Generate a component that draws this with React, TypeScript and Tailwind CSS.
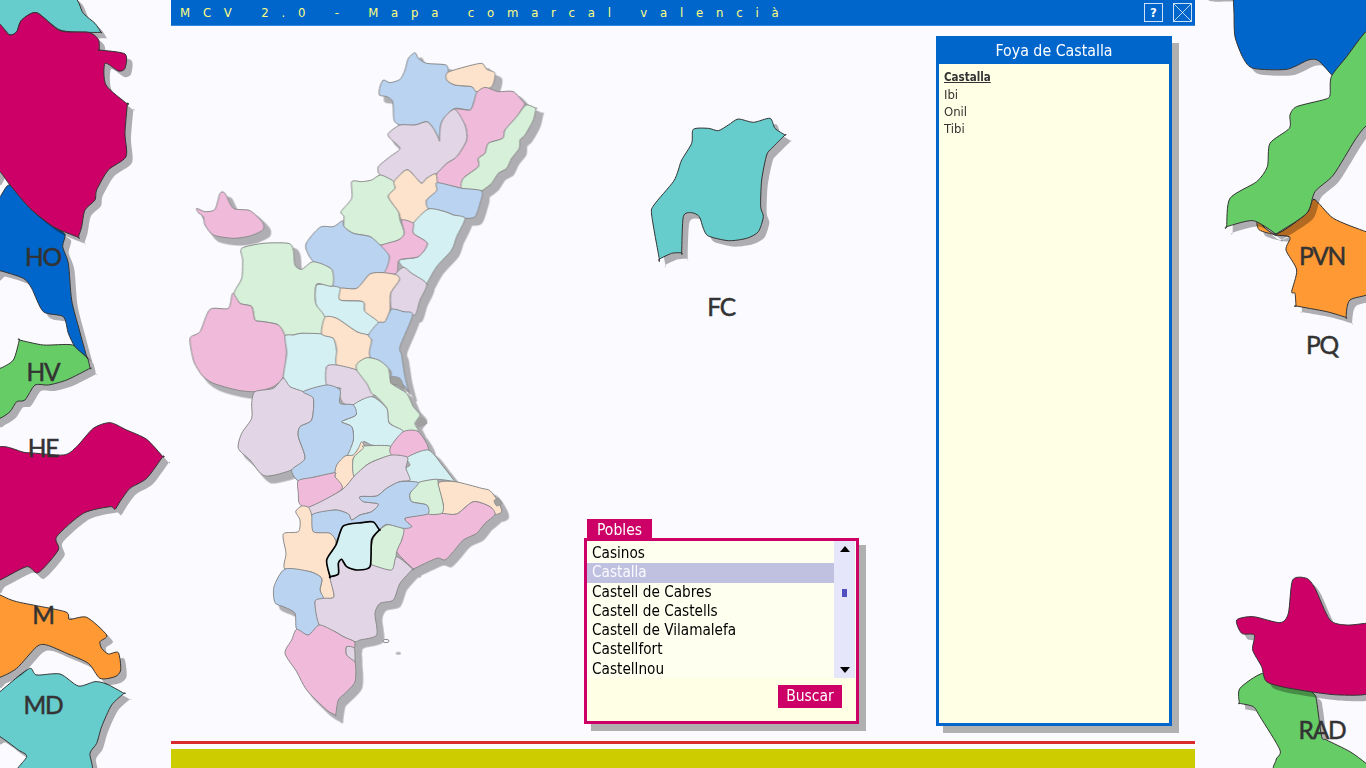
import React from "react";

const PINK = "#f0bbdb", BLUE = "#b9d3f1", PEACH = "#fde3cb", GREEN = "#d6f0da", LILAC = "#e2d5e6", CYAN = "#d5f0f3";

function smooth(s: string): string {
  const p = s.trim().split(/\s+/).map((t) => t.split(",").map(Number));
  const n = p.length;
  let d = `M${p[0][0]} ${p[0][1]}`;
  const k = 1 / 8;
  for (let i = 0; i < n; i++) {
    const p0 = p[(i - 1 + n) % n], p1 = p[i], p2 = p[(i + 1) % n], p3 = p[(i + 2) % n];
    const c1x = p1[0] + (p2[0] - p0[0]) * k, c1y = p1[1] + (p2[1] - p0[1]) * k;
    const c2x = p2[0] - (p3[0] - p1[0]) * k, c2y = p2[1] - (p3[1] - p1[1]) * k;
    d += `C${c1x.toFixed(1)} ${c1y.toFixed(1)} ${c2x.toFixed(1)} ${c2y.toFixed(1)} ${p2[0]} ${p2[1]}`;
  }
  return d + "Z";
}

// Upper half of the map, traced at 3x from (170,30)
const upper: [string, string][] = [
  [BLUE, "735,68 745,85 770,100 828,105 835,128 830,150 855,165 905,170 920,188 910,220 900,240 855,235 825,260 812,285 808,330 808,330 790,295 770,275 735,285 690,285 672,270 668,215 650,200 628,195 630,170 640,150 660,158 690,148 705,120 715,85"],
  [PEACH, "832,128 880,112 935,100 950,118 975,130 965,170 920,185 905,170 855,165 830,150"],
  [PINK, "945,172 985,185 1030,185 1065,222 1065,222 1040,260 1005,300 998,325 955,340 945,370 925,385 925,410 880,445 876,475 855,470 798,458 800,432 830,400 860,380 890,330 885,285 855,238 900,240 912,215 920,188"],
  [GREEN, "1068,225 1098,235 1098,235 1090,270 1065,315 1050,330 1048,355 1025,385 1010,415 985,430 965,460 935,483 935,483 876,475 880,445 925,410 925,385 945,370 955,340 998,325 1005,300 1040,260"],
  [LILAC, "855,238 885,285 890,330 860,380 830,400 798,432 770,445 755,460 735,440 715,420 700,425 672,455 630,435 625,410 660,380 690,355 660,325 655,310 690,285 735,285 770,275 790,295 808,330 808,330 812,285 825,260"],
  [GREEN, "632,435 672,455 675,475 655,500 685,545 690,570 703,610 685,630 630,645 600,620 550,610 522,590 522,560 513,545 545,505 545,455 575,455 605,450"],
  [PEACH, "700,425 715,420 735,440 755,460 770,445 798,432 800,482 770,510 775,535 730,580 695,570 685,545 655,500 675,475 672,455"],
  [BLUE, "800,458 855,470 876,475 935,483 930,520 915,560 885,565 850,555 825,545 775,535 770,510 800,482"],
  [CYAN, "775,537 825,545 850,555 885,565 860,620 845,660 800,710 770,762 770,762 725,730 700,712 688,690 745,680 772,640 730,610 730,580"],
  [PINK, "695,570 730,580 730,610 772,640 745,680 688,690 680,730 642,728 658,680 632,648 685,630 703,610"],
  [BLUE, "518,572 522,590 550,610 600,620 630,645 658,680 642,728 600,732 560,775 510,775 487,765 485,718 430,695 407,645 450,592 490,590"],
  [LILAC, "700,712 725,730 770,762 750,810 735,855 700,845 665,838 662,790 688,750 675,735"],
  [PEACH, "600,732 640,728 680,735 688,750 662,790 660,840 645,875 625,878 585,845 578,815 510,810 508,775 560,775"],
  [CYAN, "440,765 487,768 510,775 510,810 578,815 585,845 625,878 595,915 560,905 500,865 465,862 437,820"],
  [GREEN, "215,655 280,640 355,640 370,660 375,705 395,718 430,695 485,718 487,768 440,762 437,820 465,862 455,912 395,910 370,915 345,918 325,885 280,875 255,870 245,830 210,820 192,790 215,745 218,690"],
  [PINK, "188,790 210,820 245,830 255,870 280,875 325,885 345,918 350,970 340,1040 310,1070 255,1085 200,1080 130,1060 100,1040 85,1020 70,990 60,925 90,905 120,838 175,835"],
  [CYAN, "345,918 370,915 395,910 455,912 490,925 500,960 500,1005 470,1010 470,1065 400,1085 350,1070 340,1040 350,970"],
  [PEACH, "465,862 500,865 560,905 595,915 605,930 600,980 565,1000 560,1020 500,1005 500,960 490,925 455,912"],
  [BLUE, "595,915 625,878 645,875 665,838 700,845 728,855 690,950 695,975 705,1040 718,1090 718,1090 700,1065 665,1060 660,1020 600,980 605,930"],
  [LILAC, "470,1010 500,1005 560,1020 595,1045 612,1095 555,1123 520,1120 505,1085 512,1075 470,1065"],
  [GREEN, "562,1000 590,983 625,990 655,1015 665,1060 710,1090 730,1130 750,1155 735,1180 745,1205 700,1205 655,1175 650,1135 620,1100 605,1090 590,1060 560,1020"],
  [PINK, "80,535 105,545 135,538 150,490 165,490 190,535 240,542 278,578 278,600 240,618 190,625 130,615 105,585 100,560 85,548"],
];

// Lower half of the map, traced at 3x from (170,370)
const lower: [string, string][] = [
  [CYAN, "605,80 650,115 658,160 700,185 662,230 605,225 580,215 565,250 530,260 550,210 545,170 515,155 558,135 550,105"],
  [LILAC, "255,65 310,55 340,25 360,50 400,65 430,85 425,150 390,170 385,200 405,265 370,298 285,318 240,270 205,235 215,190 245,145 245,100"],
  [BLUE, "400,65 470,45 510,60 510,100 550,105 558,135 515,155 545,170 550,210 530,260 500,290 495,308 430,322 385,332 365,300 405,265 385,200 390,170 425,150 430,85"],
  [PEACH, "575,215 583,235 550,265 552,320 518,358 495,320 500,285 525,258 550,255 565,235"],
  [GREEN, "580,228 660,228 665,255 620,270 590,285 552,318 550,265 580,235"],
  [PINK, "700,185 745,185 775,240 712,262 665,255 662,230"],
  [CYAN, "712,262 775,240 820,290 855,335 855,335 800,328 745,338 715,330 708,295 720,285"],
  [PEACH, "805,340 855,335 935,355 960,362 985,395 995,425 975,433 960,410 910,395 860,432 815,430 820,405"],
  [PINK, "910,395 960,410 975,433 945,460 920,490 880,510 850,545 825,570 800,565 730,597 730,597 680,545 695,510 700,475 725,470 705,445 770,432 815,430 860,432"],
  [GREEN, "650,465 700,475 695,510 680,545 670,600 605,585 610,505"],
  [GREEN, "745,338 800,328 805,345 820,405 815,430 775,432 770,405 725,395 720,370"],
  [LILAC, "620,270 665,255 712,262 708,295 720,330 690,335 650,355 620,378 570,380 580,395 625,402 605,425 570,435 545,450 535,432 495,420 425,435 415,412 515,360 553,318 590,285"],
  [BLUE, "745,338 720,370 725,395 770,405 773,432 705,445 725,470 700,475 650,463 625,480 605,462 580,458 520,468 500,510 480,490 430,485 425,435 495,420 535,432 545,450 570,435 605,425 625,402 580,395 570,380 620,378 650,355 690,335"],
  [PINK, "385,332 430,322 495,308 495,320 515,358 415,412 388,400 385,370"],
  [PEACH, "395,408 415,412 425,435 430,485 480,490 498,520 470,570 480,620 492,680 460,685 450,660 455,625 420,605 345,597 348,550 340,492 385,485 390,450 377,425"],
  [BLUE, "345,597 420,605 455,625 450,660 460,685 435,695 448,765 415,795 380,778 375,730 345,712 315,698 312,650"],
  [LILAC, "492,680 480,620 505,612 505,580 515,568 530,590 560,600 600,590 605,585 665,600 680,560 728,597 728,597 690,640 670,690 630,700 615,730 620,795 570,810 555,815 520,800 495,785 448,765 435,695 460,685"],
  [PINK, "380,778 415,795 448,765 495,785 520,800 553,815 552,835 530,830 530,855 555,875 555,935 525,970 505,990 497,1035 497,1035 470,1020 410,960 380,905 345,850 365,810"],
  [LILAC, "530,830 553,835 555,875 555,875 530,855"],
];
const selected = "520,468 575,458 610,456 628,480 628,480 605,510 600,590 560,600 530,590 515,568 505,580 505,612 480,620 480,620 470,570 498,525";

const fc = "160,58 205,55 235,62 265,45 295,27 340,37 390,25 405,55 435,75 435,75 395,115 380,135 365,210 362,290 370,320 355,365 320,385 265,392 205,378 190,355 178,320 155,308 130,320 125,428 125,428 95,430 58,447 58,447 35,315 42,285 100,215 115,180 125,150 155,100";

function Piece({ points, fill }: { points: string; fill: string }) {
  const d = smooth(points);
  return (
    <g>
      <path d={d} fill="#000" opacity={0.3} transform="translate(18,18)" />
      <path d={d} fill={fill} stroke="#333" strokeWidth={3} strokeLinejoin="round" />
    </g>
  );
}

function Drawing() {
  return (
    <svg className="absolute left-0 top-0 h-[768px] w-[1366px]" viewBox="0 0 1366 768">
      {/* left column, traced from (0,0) */}
      <g transform="scale(0.33333)">
        <Piece fill="#66cccc" points="-20,-20 205,-20 250,40 285,70 303,97 303,97 265,97 180,90 110,38 65,60 50,95 28,105 -20,85" />
        <Piece fill="#66cc66" points="58,1020 58,1020 130,1035 218,1035 260,1070 270,1105 270,1105 200,1140 145,1155 105,1155 75,1200 50,1205 30,1235 0,1255 -20,1255 -20,1100 0,1105 40,1080" />
        <Piece fill="#0066cc" points="30,555 90,625 160,680 195,703 188,740 205,790 215,900 238,990 260,1070 260,1070 225,1040 205,1000 190,950 130,935 95,865 70,835 0,812 -20,812 -20,590 0,590" />
        <Piece fill="#cc0066" points="-20,85 28,105 50,95 65,60 110,38 180,92 265,97 295,118 298,150 298,150 375,162 375,205 355,213 315,190 318,255 382,312 382,312 375,400 378,470 325,510 290,570 285,600 255,630 245,680 235,712 235,712 160,680 90,625 30,555 0,515 -20,515" />
      </g>
      <g transform="translate(0,380) scale(0.33333)">
        <Piece fill="#cc0066" points="-20,222 80,218 190,225 230,200 280,145 330,128 380,150 440,178 488,230 488,230 440,295 390,325 360,365 345,388 330,380 250,400 170,470 175,510 115,578 80,560 0,600 -20,600" />
        <Piece fill="#66cccc" points="-20,950 0,935 60,885 92,865 110,885 180,882 235,918 285,905 320,912 372,940 372,940 335,975 305,1040 290,1090 270,1120 265,1190 50,1190 80,1130 55,1110 0,1070 -20,1070" />
        <Piece fill="#ff9933" points="-20,640 0,645 50,665 195,695 208,718 260,712 320,765 300,785 305,805 325,822 355,818 362,870 345,890 300,895 265,850 200,820 140,795 110,800 50,865 0,892 -20,892" />
      </g>

      {/* right column */}
      <g transform="translate(1190,0) scale(0.33333)">
        <Piece fill="#0066cc" points="132,40 130,0 128,-14 128,-14 40,-16 40,-60 560,-60 560,95 528,95 470,170 428,228 428,228 385,182 355,180 290,208 190,205 160,175 135,110" />
        <Piece fill="#ff9933" points="372,598 430,655 528,695 560,700 560,865 480,900 468,952 468,952 410,935 318,918 318,918 315,880 305,875 320,810 288,750 300,712 258,705 208,690 204,665 258,702 350,640" />
        <Piece fill="#66cc66" points="528,95 470,170 424,230 420,285 405,298 320,320 300,345 298,385 240,430 232,500 200,545 120,595 110,680 110,680 190,662 258,702 258,702 350,640 375,575 430,525 495,420 528,378 560,370 560,95" />
      </g>
      <g transform="translate(1190,560) scale(0.33333)">
        <Piece fill="#66cc66" points="218,340 150,385 148,430 148,430 190,440 210,470 270,570 258,600 270,640 560,640 528,610 480,575 410,540 395,530 380,425 370,400 300,350" />
        <Piece fill="#cc0066" points="140,180 190,170 270,188 295,160 308,60 350,55 375,85 420,180 470,195 528,190 560,190 560,385 450,405 300,385 230,365 215,320 188,270 193,225 155,220" />
      </g>

      {/* selected comarca */}
      <g transform="translate(640,110) scale(0.33333)">
        <Piece fill="#66cccc" points={fc} />
      </g>

      {/* main map */}
      <g transform="translate(170,30) scale(0.33333)">
        <g opacity={0.3} transform="translate(18,18)">
          <g>
            {upper.map(([, p], i) => <path key={i} d={smooth(p)} fill="#000" stroke="#000" strokeWidth={8} />)}
            <g transform="translate(0,1020)">
              {lower.map(([, p], i) => <path key={i} d={smooth(p)} fill="#000" stroke="#000" strokeWidth={8} />)}
              <path d={smooth(selected)} fill="#000" />
              <ellipse cx={667} cy={832} rx={8} ry={4} fill="#000" />
            </g>
          </g>
        </g>
        {upper.map(([f, p], i) => <path key={i} d={smooth(p)} fill={f} stroke="#8a8a8a" strokeWidth={3} strokeLinejoin="round" />)}
        <g transform="translate(0,1020)">
          {lower.map(([f, p], i) => <path key={i} d={smooth(p)} fill={f} stroke="#8a8a8a" strokeWidth={3} strokeLinejoin="round" />)}
          <path d={smooth("665,20 690,25 702,55 680,45 662,40")} fill="#a0a0a0" stroke="#8a8a8a" strokeWidth={2} />
          <path d={smooth("738,155 755,140 772,160 745,172")} fill="#a0a0a0" />
          <path d={smooth("972,392 985,385 996,400 980,408")} fill="#a0a0a0" stroke="#8a8a8a" strokeWidth={2} />
          <path d={smooth(selected)} fill={CYAN} stroke="#000" strokeWidth={5} strokeLinejoin="round" />
          <ellipse cx={648} cy={813} rx={9} ry={5} fill="#fafaff" stroke="#8a8a8a" strokeWidth={3} />
        </g>
      </g>
    </svg>
  );
}

const labels = [
  { t: "HO", c: "left-[43px] top-[257px]" },
  { t: "HV", c: "left-[43px] top-[372px]" },
  { t: "HE", c: "left-[43px] top-[448px]" },
  { t: "M", c: "left-[43px] top-[615px]" },
  { t: "MD", c: "left-[43px] top-[705px]" },
  { t: "FC", c: "left-[721px] top-[307px]" },
  { t: "PVN", c: "left-[1322px] top-[256px]" },
  { t: "PQ", c: "left-[1322px] top-[345px]" },
  { t: "RAD", c: "left-[1322px] top-[730px]" },
];

const pobles = ["Casinos", "Castalla", "Castell de Cabres", "Castell de Castells", "Castell de Vilamalefa", "Castellfort", "Castellnou"];

export default function App() {
  return (
    <div className="relative h-[768px] w-[1366px] overflow-hidden bg-[#fafaff] font-['DejaVu_Sans_Condensed','DejaVu_Sans',sans-serif]">
      <Drawing />
      {labels.map((l) => (
        <span key={l.t} className={`absolute ${l.c} -translate-x-1/2 -translate-y-1/2 font-['Lato',sans-serif] text-[24.5px] font-normal leading-none tracking-[-1.2px] text-[#333333] [-webkit-text-stroke:0.5px_#333333]`}>
          {l.t}
        </span>
      ))}

      <div className="relative ml-[171px] flex h-full w-[1024px] flex-col">
        <header className="flex h-[26px] items-center justify-between border-b border-[#3388dd] bg-[#0066cc] pl-[9px] pr-[3px]">
          <h1 className="whitespace-pre pt-[1px] text-[13px] font-normal tracking-[12.8px] text-[#ffff80]">MCV 2.0 - Mapa comarcal valencià</h1>
          <div className="flex items-center gap-[10px]">
            <button className="flex h-[19px] w-[19px] items-center justify-center border border-[#cfe2f5] text-[13px] font-bold leading-none text-white">?</button>
            <button className="h-[19px] w-[19px] border border-[#cfe2f5]">
              <svg viewBox="0 0 17 17" className="h-full w-full" stroke="#e8f1fa" strokeWidth="0.8">
                <path d="M0 0L17 17M17 0L0 17" />
              </svg>
            </button>
          </div>
        </header>

        <main className="flex h-[715px] pb-[15px] pl-[413px] pt-[10px]">
          <section className="flex w-[275px] flex-col justify-end pb-[2px]">
            <div className="ml-[3px] h-[19px] w-[65px] bg-[#cc0066] text-center text-[15.5px] leading-[22px] text-white">Pobles</div>
            <div className="flex h-[186px] flex-col border-[3px] border-[#cc0066] bg-[#ffffe6] shadow-[7px_7px_0_#b0b0b0]">
              <div className="flex h-[137px] bg-[#fffff0]">
                <ul className="w-[247px] pt-[3px] text-[15.2px] leading-[19.3px] text-black">
                  {pobles.map((p) => (
                    <li key={p} className={p === "Castalla" ? "bg-[#c0c0e0] pl-[5px] text-[#fafaff]" : "pl-[5px]"}>{p}</li>
                  ))}
                </ul>
                <div className="flex w-[21px] flex-col items-center bg-[#e6e6fa] py-[5px]">
                  <svg viewBox="0 0 10 6" className="h-[6px] w-[10px]"><path d="M5 0L10 6H0Z" fill="#000" /></svg>
                  <div className="mt-[37px] h-[8px] w-[5px] bg-[#5050c0]" />
                  <svg viewBox="0 0 10 6" className="mt-auto h-[6px] w-[10px]"><path d="M0 0H10L5 6Z" fill="#000" /></svg>
                </div>
              </div>
              <div className="flex justify-end pr-[14px] pt-[7px]">
                <button className="h-[23px] w-[64px] bg-[#cc0066] pt-[1px] text-[15.5px] leading-none text-white">Buscar</button>
              </div>
            </div>
          </section>

          <aside className="ml-[77px] flex w-[236px] flex-col border-[3px] border-[#0066cc] bg-[#ffffe6] shadow-[7px_7px_0_#b0b0b0]">
            <h2 className="h-[25px] bg-[#0066cc] text-center text-[15.8px] font-normal leading-[24px] text-white">Foya de Castalla</h2>
            <ul className="pl-[5px] pt-[5px] text-[13px] leading-[17px] text-[#333333]">
              <li className="text-[11.5px] font-bold underline">Castalla</li>
              <li>Ibi</li>
              <li>Onil</li>
              <li>Tibi</li>
            </ul>
          </aside>
        </main>

        <div className="h-[3px] bg-[#d92b2b]" />
        <div className="mt-[5px] h-[19px] bg-[#cccc00]" />
      </div>
    </div>
  );
}
